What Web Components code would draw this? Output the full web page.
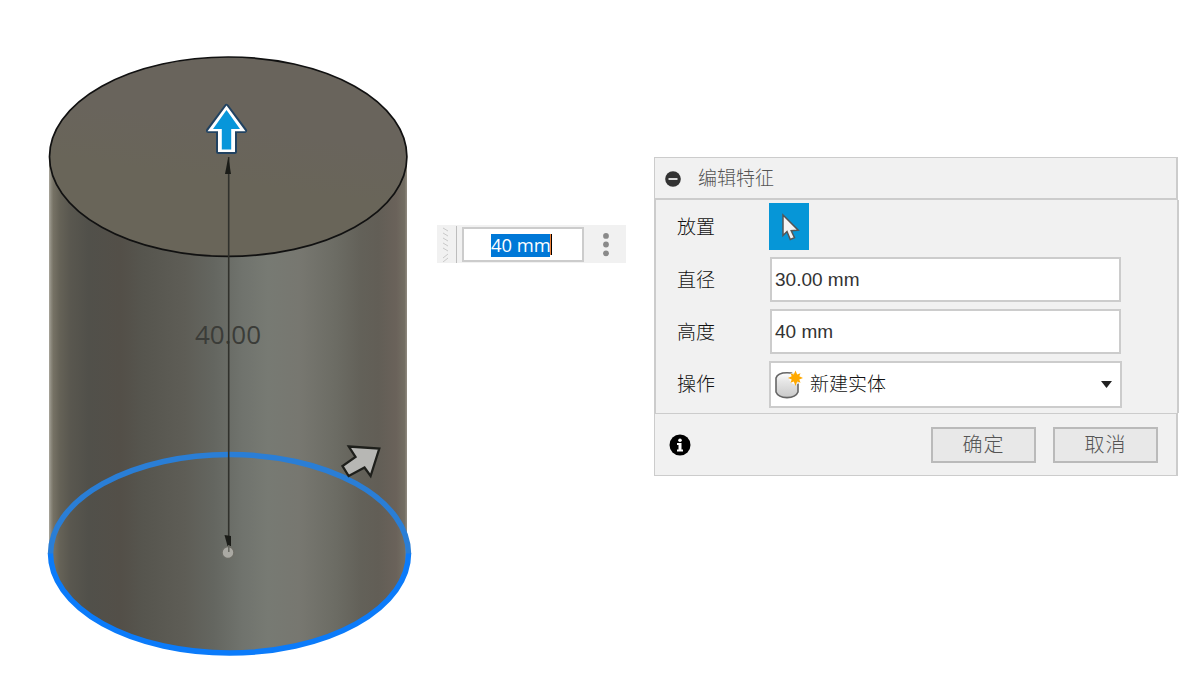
<!DOCTYPE html>
<html lang="zh-CN">
<head>
<meta charset="utf-8">
<title>编辑特征</title>
<style>
html,body{margin:0;height:100%;background:#fff;overflow:hidden}
body{font-family:"Liberation Sans","Noto Sans CJK SC",sans-serif;font-size:19px;color:#333}
</style>
</head>
<body>
<cad-workspace>
  <cylinder-view slot="model"></cylinder-view>
  <value-bar slot="value">40 mm</value-bar>
  <feature-dialog slot="dialog" heading="编辑特征">
    <form-row label="放置"><pick-button></pick-button></form-row>
    <form-row label="直径"><text-field>30.00 mm</text-field></form-row>
    <form-row label="高度"><text-field>40 mm</text-field></form-row>
    <form-row label="操作"><select-field>新建实体</select-field></form-row>
    <push-button slot="actions">确定</push-button>
    <push-button slot="actions">取消</push-button>
  </feature-dialog>
</cad-workspace>
<script>
const define = (name, html) => customElements.define(name, class extends HTMLElement {
  constructor() {
    super();
    this.attachShadow({mode: 'open'}).innerHTML = html;
  }
  connectedCallback() {
    for (const attr of ['label', 'heading']) {
      const el = this.shadowRoot.querySelector('.' + attr);
      if (el) el.textContent = this.getAttribute(attr);
    }
  }
});

define('cad-workspace', `<style>
:host{display:grid;grid-template-columns:437px 217px 525px;width:1199px;height:699px;align-items:start}
.value{padding-top:225px}
.dialog{padding-top:157px}
</style><slot name="model"></slot><div class="value"><slot name="value"></slot></div><div class="dialog"><slot name="dialog"></slot></div>`);

define('cylinder-view', `<style>
:host{display:block;width:437px;height:699px}
svg{display:block}
text{font-family:"Open Sans","Noto Sans",sans-serif;font-size:26px}
</style>
<svg width="437" height="699" viewBox="0 0 437 699">
<defs>
<linearGradient id="side" gradientUnits="userSpaceOnUse" x1="49" y1="0" x2="407" y2="0">
<stop offset="0" stop-color="#a9a69c"/><stop offset=".006" stop-color="#8a877b"/><stop offset=".012" stop-color="#767265"/><stop offset=".03" stop-color="#656257"/>
<stop offset=".06" stop-color="#59574f"/><stop offset=".11" stop-color="#51504a"/><stop offset=".2" stop-color="#534f48"/>
<stop offset=".26" stop-color="#56554e"/><stop offset=".38" stop-color="#5e5d56"/><stop offset=".46" stop-color="#646660"/>
<stop offset=".54" stop-color="#70736d"/><stop offset=".61" stop-color="#777a73"/><stop offset=".7" stop-color="#777770"/>
<stop offset=".8" stop-color="#6c6c64"/><stop offset=".87" stop-color="#636159"/><stop offset=".92" stop-color="#625e56"/>
<stop offset=".97" stop-color="#6a625a"/><stop offset=".993" stop-color="#736e63"/><stop offset="1" stop-color="#918b80"/>
</linearGradient>
<linearGradient id="cap" x1=".55" y1=".35" x2=".48" y2=".62"><stop offset="0" stop-color="#69645c"/><stop offset="1" stop-color="#696559"/></linearGradient>
</defs>
<path d="M49 156V553H50.500A179 99.500 0 0 0 408.500 553L407 545V156Z" fill="url(#side)"/>
<path d="M50.500 554A179 99.500 0 0 1 408.500 554" fill="none" stroke="#2a7ed6" stroke-width="5.500"/>
<path d="M50.500 553.500A179 99.500 0 0 0 408.500 553.500" fill="none" stroke="#0b7bfa" stroke-width="5.500"/>
<ellipse cx="228.200" cy="156.700" rx="178.700" ry="99.700" fill="url(#cap)" stroke="#111" stroke-width="1.700"/>
<text x="195" y="344" fill="#3b3c38" textLength="66">40.00</text>
<path d="M228.700 157V548" stroke="#30312c" stroke-width="1.600"/>
<path d="M228.300 157L231 174H225Z" fill="#1b1c18"/>
<circle cx="228" cy="552.500" r="6" fill="#aaa9a3" stroke="#6d6d66" stroke-width="1.500"/>
<path d="M224.500 535L231 536V546H227.500Z" fill="#1b1c18"/><path d="M228.800 545V552" stroke="#65665f" stroke-width="1.500"/>
<path d="M226.500 106.500L244.500 130.500H234.500V151.500H218.500V130.500H208.500Z" fill="#214261" stroke="#214261" stroke-width="5" stroke-linejoin="round"/>
<path d="M226.500 105.500L245.500 131.300H235V152H218V131.300H207.500Z" fill="#fff"/>
<path d="M226.500 110L240 129H231.200V149.500H221.800V129H213Z" fill="#0796da"/>
<path d="M348.800 446.500L379.300 448.500L370.600 476L364.500 467.500L348.700 476L342.500 466L355.500 457Z" fill="#b7b7b4" stroke="#1e1f1b" stroke-width="2.300"/>
</svg>`);

define('value-bar', `<style>
:host{display:flex;box-sizing:border-box;width:189px;height:38px;padding:2px 0 1px 6px;background:#f1f1f1;align-items:center}
.grip{width:5px;height:35px;flex:none}
.line{width:1px;height:37px;margin:0 5px 0 8px;background:#bdbdbd}
.box{box-sizing:border-box;width:122px;height:35px;border:2px solid #ccc;background:#fff;display:flex;align-items:center;justify-content:center}
.sel{background:#0078d7;color:#fff;font:18.400px/21px "Open Sans","Noto Sans",sans-serif;height:23px;width:59px;margin-top:1px;white-space:nowrap}
.caret{width:1px;height:21px;border-left:1px solid #ef8138;background:#000;margin:0 3px 1px 0}
.more{margin-left:19px}
svg{display:block}
</style><svg class="grip" viewBox="0 0 5 35"><path d="M0 1l5 3M0 6l5 3M0 11l5 3M0 16l5 3M0 21l5 3M5 27l-5 4M5 31l-5 4" stroke="#c9c9c9" fill="none"/></svg>
<span class="line"></span><div class="box"><span class="sel"><slot></slot></span><span class="caret"></span></div>
<svg class="more" width="6" height="24"><g fill="#8a8a8a"><circle cx="3" cy="2.900" r="2.900"/><circle cx="3" cy="11.500" r="2.900"/><circle cx="3" cy="20.300" r="2.900"/></g></svg>`);

define('feature-dialog', `<style>
:host{display:block;width:525px}
header{box-sizing:border-box;width:524px;height:43px;background:#f1f1f1;border:1px solid #ccc;border-width:1px 2px 2px 1px;display:flex;align-items:center;padding-left:9.500px;gap:17.500px;color:#555;font-weight:300}
header svg{display:block;margin-top:2px}
.heading{line-height:28px;margin-top:2px}
main{box-sizing:border-box;height:213px;background:#f1f1f1;border:solid #ccc;border-width:0 2px;padding-top:3px;display:grid;grid-template-rows:54px 52px 52px 50px}
footer{box-sizing:border-box;width:524px;height:63px;background:#f1f1f1;border:1px solid #ccc;border-right-width:2px;display:flex;align-items:center;padding:0 18px 0 14px}
.actions{display:flex;gap:17px;margin-left:auto}
footer svg{margin-top:1px}
</style>
<header><svg width="16" height="16"><circle cx="8" cy="8" r="7.800" fill="#333"/><path d="M3.500 8h9" stroke="#eee" stroke-width="1.800"/></svg><span class="heading"></span></header>
<main><slot></slot></main>
<footer><svg width="22" height="22"><circle cx="11" cy="11" r="10.500" fill="#000"/><g fill="#fff"><circle cx="11" cy="6.200" r="1.800"/><path d="M8 9h4.500v6.500H14v2H8v-2h1.500V11H8z"/></g></svg><div class="actions"><slot name="actions"></slot></div></footer>`);

define('form-row', `<style>
:host{display:grid;grid-template-columns:93px 1fr;align-items:start;padding-left:21px}
.label{font-weight:300;line-height:28px;padding-top:10px;color:#111}
:host(:first-child) .label{padding-top:11px}
</style><span class="label"></span><slot></slot>`);

define('pick-button', `<style>
:host{display:block;width:40px;height:47px;background:#0696d7;margin-left:-1px}
svg{display:block}
</style><svg width="40" height="47"><path d="M14 12V32.500l4-4 3.300 8 4.200-1.800-3.300-7 7-.5Z" fill="#f4f4f4" stroke="#555" stroke-width="1.500"/></svg>`);

define('text-field', `<style>
:host{box-sizing:border-box;display:block;width:351px;height:45px;border:2px solid #ccc;background:#fff;padding-left:3px;line-height:41px;color:#333}
</style><slot></slot>`);

define('select-field', `<style>
:host{box-sizing:border-box;display:flex;align-items:center;width:353px;height:47px;margin-left:-1px;border:2px solid #ccc;background:#fff;padding:0 8px 0 4px;font-weight:300;color:#111}
.arrow{margin-left:auto}
.label-text{margin-left:6px;line-height:28px;margin-top:1px}
</style><svg width="29" height="30" viewBox="0 0 29 30">
<defs><linearGradient id="b" x2="0" y2="1"><stop stop-color="#fff"/><stop offset=".35" stop-color="#e6e6e6"/><stop offset="1" stop-color="#c9c9c9"/></linearGradient></defs>
<path d="M1 8C3 1 21 1 23 8V22C20 29.500 4 29.500 1 22Z" fill="url(#b)" stroke="#666" stroke-width="1.600"/>
<circle cx="20.500" cy="8" r="6.500" fill="#fff" opacity=".8"/>
<path d="M20.500 .5l1.700 4L25.500 3.200l-1.200 3L28 8l-3.700 1.600 1.200 3.200-3.300-1.300-1.700 4.500-1.700-4.500-3.300 1.300 1.200-3.200L13 8l3.700-1.800-1.200-3 3.300 1.300Z" fill="#ffa900"/></svg>
<span class="label-text"><slot></slot></span><svg class="arrow" width="11" height="7"><path d="M0 0h11L5.500 7z" fill="#222"/></svg>`);

define('push-button', `<style>
:host{box-sizing:border-box;display:flex;align-items:center;justify-content:center;width:105px;height:36px;border:2px solid #bababa;background:#e8e8e8;color:#555;font-size:20px;font-weight:300;letter-spacing:1px;line-height:28px;padding-top:1px}
</style><slot></slot>`);
</script>
</body>
</html>
